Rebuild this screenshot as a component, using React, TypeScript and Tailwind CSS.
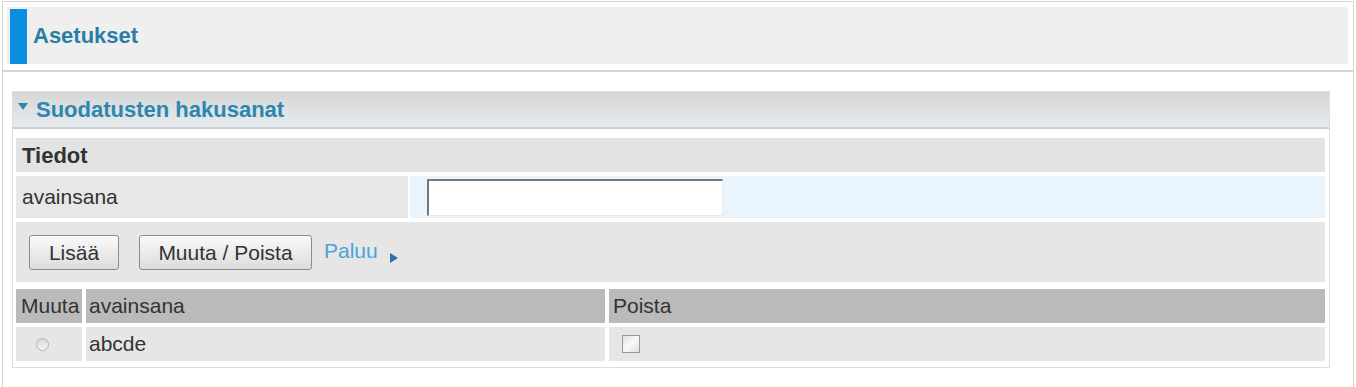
import { useState } from 'react';

const font = { fontFamily: '"Liberation Sans", Arial, sans-serif' };

export default function App() {
  const [keyword, setKeyword] = useState('');

  return (
    <div className="w-[1356px] h-[387px] bg-white overflow-hidden pt-px" style={font}>
      <div className="mx-[2px] h-[400px] border border-[#d6d6d6] bg-white">
        {/* Page header */}
        <div className="ml-[4px] mr-[5px] mt-[5px] h-[57px] bg-[#efefef] flex items-stretch pl-[3px] pt-[2px]">
          <div className="w-[17px] bg-[#0b8ee0]" />
          <div className="flex items-center pl-[6px] pb-[2px] text-[22px] font-bold text-[#2a7ea6]">
            Asetukset
          </div>
        </div>
        <div className="mt-[6px] h-[2px] bg-[#d6d6d6]" />

        {/* Section */}
        <div className="ml-[9px] mr-[23px] mt-[19px] border border-[#dedede]">
          <div className="h-[37px] bg-gradient-to-b from-[#d6d6d6] to-[#e7ebed] border-b-[2px] border-[#c6ced6] flex items-center pl-[5px] text-[22px] font-bold text-[#2c86b2]">
            <svg width="10" height="7" viewBox="0 0 10 7" className="mr-[8px] mb-[7px]">
              <path d="M0 0H10L5 7Z" fill="#2c86b2" />
            </svg>
            Suodatusten hakusanat
          </div>

          <div className="pl-[3px] pr-[4px] pt-[9px] pb-[6px] flex flex-col text-[21px] text-[#333]">
            <div className="h-[34px] bg-[#e3e3e3] flex items-center pl-[6px] font-bold text-[22px] text-[#333]">
              Tiedot
            </div>

            <div className="mt-[4px] h-[42px] flex">
              <div className="w-[392px] bg-[#e7e7e7] flex items-center pl-[6px]">avainsana</div>
              <div className="flex-1 ml-[2px] bg-[#eaf4fc] flex items-center pl-[17px]">
                <input
                  value={keyword}
                  onChange={(e) => setKeyword(e.target.value)}
                  className="w-[296px] h-[37px] bg-white border-t-[2px] border-l-[2px] border-[#777] border-r border-b border-r-[#e8e8e8] border-b-[#e8e8e8] outline-none px-1"
                />
              </div>
            </div>

            <div className="mt-[4px] h-[60px] bg-[#e6e6e6] flex items-center pl-[13px] pt-[1px]">
              <button className="w-[90px] h-[35px] rounded-[3px] border border-[#8c8c8c] bg-gradient-to-b from-[#fafafa] to-[#dcdcdc] text-[21px] text-[#333]">
                Lisää
              </button>
              <button className="ml-[20px] w-[173px] h-[35px] rounded-[3px] border border-[#8c8c8c] bg-gradient-to-b from-[#fafafa] to-[#dcdcdc] text-[21px] text-[#333]">
                Muuta / Poista
              </button>
              <a href="#" className="ml-[12px] mb-[4px] text-[#4aa3dc] flex items-center">
                Paluu
                <svg width="8" height="10" viewBox="0 0 8 10" className="ml-[12px] mt-[14px]">
                  <path d="M0 0L8 5L0 10Z" fill="#2b70aa" />
                </svg>
              </a>
            </div>

            <div className="mt-[7px] h-[34px] flex bg-white gap-[4px]">
              <div className="w-[66px] bg-[#bababa] flex items-center pl-[5px]">Muuta</div>
              <div className="w-[519px] bg-[#bababa] flex items-center pl-[3px]">avainsana</div>
              <div className="flex-1 bg-[#bababa] flex items-center pl-[4px]">Poista</div>
            </div>

            <div className="mt-[4px] h-[34px] flex gap-[4px]">
              <div className="w-[66px] bg-[#e6e6e6] flex items-center pl-[20px]">
                <span className="w-[13px] h-[13px] rounded-full border border-[#b5b5b5] bg-gradient-to-b from-[#d8d8d8] to-[#f4f4f4]" />
              </div>
              <div className="w-[519px] bg-[#e6e6e6] flex items-center pl-[3px]">abcde</div>
              <div className="flex-1 bg-[#e6e6e6] flex items-center pl-[13px]">
                <span className="w-[18px] h-[18px] border border-[#9a9a9a] bg-gradient-to-br from-[#e0e0e0] via-[#f8f8f8] to-[#e0e0e0]" />
              </div>
            </div>
          </div>
        </div>
      </div>
    </div>
  );
}
